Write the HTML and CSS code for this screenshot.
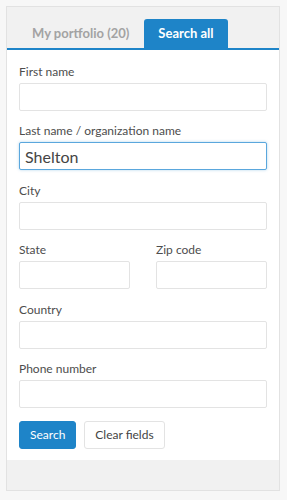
FILE: index.html
```html
<!DOCTYPE html>
<html>
<head>
    <title>Search</title>
    <link rel="stylesheet" href="styles.css">
</head>
<body>
    <div class="panel">
        <div class="tabs">
            <div class="tab">My portfolio (20)</div>
            <div class="tab active">Search all</div>
        </div>
        <form class="search-form">
            <div class="field">
                <label>First name</label>
                <input type="text">
            </div>
            <div class="field">
                <label>Last name / organization name</label>
                <input type="text" class="focused" value="Shelton" autofocus>
            </div>
            <div class="field">
                <label>City</label>
                <input type="text">
            </div>
            <div class="row">
                <div class="field">
                    <label>State</label>
                    <input type="text">
                </div>
                <div class="field">
                    <label>Zip code</label>
                    <input type="text">
                </div>
            </div>
            <div class="field">
                <label>Country</label>
                <input type="text">
            </div>
            <div class="field">
                <label>Phone number</label>
                <input type="text">
            </div>
            <div class="actions">
                <button type="submit" class="btn btn-primary">Search</button>
                <button type="reset" class="btn">Clear fields</button>
            </div>
        </form>
        <div class="footer"></div>
    </div>
</body>
</html>
```

FILE: styles.css
```css
body {
    margin: 0;
    padding: 6px 7px 9px 6px;
    background: #f7f7f7;
    font-family: Lato, "Open Sans", Arial, sans-serif;
    color: #4d4d4d;
}
.panel {
    border: 1px solid #e2e2e2;
    background: #f1f1f1;
}
.tabs {
    display: flex;
    gap: 1px;
    padding: 12px 12px 0 11px;
    border-bottom: 2px solid #1e84c8;
}
.tab {
    height: 29px;
    line-height: 29px;
    padding: 0 14px;
    font-size: 13px;
    font-weight: bold;
    color: #a3a3a3;
    border-radius: 3px 3px 0 0;
}
.tab.active {
    background: #1e84c8;
    color: white;
}
.search-form {
    background: white;
    padding: 14px 12px 11px;
}
.field {
    display: flex;
    flex-direction: column;
    margin-bottom: 12.4px;
}
.field label {
    font-size: 12px;
    line-height: 16px;
    margin-bottom: 3px;
    color: #4d4d4d;
}
.field input {
    box-sizing: border-box;
    height: 28px;
    border: 1px solid #e3e3e3;
    border-radius: 2px;
    padding: 0 5px;
    font-family: Lato, "Open Sans", Arial, sans-serif;
    font-size: 16px;
    color: #444;
    outline: none;
}
.field input.focused {
    border-color: #5aa7dd;
    box-shadow: 0 0 3px rgba(30, 132, 200, 0.35);
}
.row {
    display: grid;
    grid-template-columns: 111px 111px;
    justify-content: space-between;
}
.actions {
    display: flex;
    gap: 8px;
    padding-top: 0.6px;
}
.btn {
    height: 28px;
    padding: 0 10px;
    font-family: Lato, "Open Sans", Arial, sans-serif;
    font-size: 12px;
    color: #444;
    background: white;
    border: 1px solid #e3e3e3;
    border-radius: 3px;
}
.btn-primary {
    background: #1e84c8;
    border-color: #1e84c8;
    color: white;
}
.footer {
    height: 30px;
}
```
